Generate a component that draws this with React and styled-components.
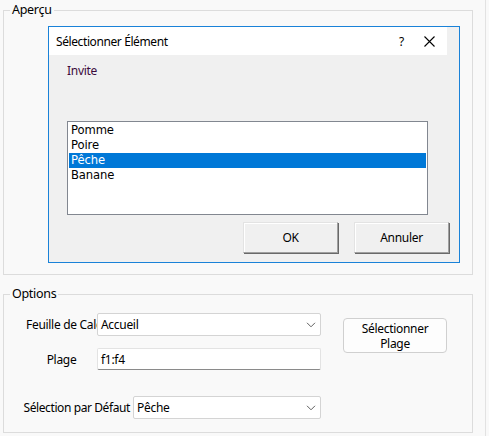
import React from "react";
import styled, { createGlobalStyle } from "styled-components";

const GlobalStyle = createGlobalStyle`
  html, body {
    margin: 0;
    padding: 0;
    background: #f9f9f9;
  }
  body {
    font-family: "Noto Sans", "Open Sans", sans-serif;
    font-size: 12px;
    letter-spacing: -0.3px;
    color: #000;
  }
`;

const fruits = ["Pomme", "Poire", "Pêche", "Banane"];

const Chevron = () => (
  <svg width="10" height="6" viewBox="0 0 10 6">
    <path d="M1 0.8 L5 4.8 L9 0.8" fill="none" stroke="#606060" strokeWidth="1" />
  </svg>
);

const CloseIcon = () => (
  <svg width="11" height="11" viewBox="0 0 11 11">
    <path d="M0.5 0.5 L10.5 10.5 M10.5 0.5 L0.5 10.5" stroke="#000" strokeWidth="1.1" />
  </svg>
);

const App = () => {
  return (
    <>
      <GlobalStyle />
      <Page>
        <Group>
          <Legend>Aperçu</Legend>
          <PreviewArea>
            <Dialog>
              <TitleBar>
                <Title>Sélectionner Élément</Title>
                <Help>?</Help>
                <CloseBtn>
                  <CloseIcon />
                </CloseBtn>
              </TitleBar>
              <DialogBody>
                <Prompt>Invite</Prompt>
                <ListBox>
                  {fruits.map((f) => (
                    <ListItem key={f} $selected={f === "Pêche"}>
                      {f}
                    </ListItem>
                  ))}
                </ListBox>
                <ButtonRow>
                  <ClassicButton>OK</ClassicButton>
                  <ClassicButton>Annuler</ClassicButton>
                </ButtonRow>
              </DialogBody>
            </Dialog>
          </PreviewArea>
        </Group>

        <Group $height="147px">
          <Legend>Options</Legend>
          <OptionsLayout>
            <Fields>
              <FieldRow>
                <ClipLabel>Feuille de Calcul</ClipLabel>
                <Combo $width="224px">
                  <span>Accueil</span>
                  <Chevron />
                </Combo>
              </FieldRow>
              <FieldRow $top="12px">
                <CenterLabel>Plage</CenterLabel>
                <TextBox>f1:f4</TextBox>
              </FieldRow>
              <FieldRow $top="26px">
                <WideLabel>Sélection par Défaut</WideLabel>
                <Combo $width="188px">
                  <span>Pêche</span>
                  <Chevron />
                </Combo>
              </FieldRow>
            </Fields>
            <RangeButton>
              Sélectionner
              <br />
              Plage
            </RangeButton>
          </OptionsLayout>
        </Group>
      </Page>
    </>
  );
};

const Page = styled.div`
  width: 486px;
  height: 436px;
  box-sizing: border-box;
  border-right: 1px solid #e2e2e2;
  padding: 2px 0 0 3px;
  display: flex;
  flex-direction: column;
  gap: 11px;
`;

const Group = styled.fieldset`
  margin: 0;
  width: 470px;
  box-sizing: border-box;
  height: ${(p) => p.$height || "auto"};
  border: 1px solid #dcdcdc;
  padding: 0;
  min-width: 0;
`;

const Legend = styled.legend`
  margin-left: 6px;
  padding: 0 2px;
  font-size: 12.5px;
  line-height: 16px;
  height: 16px;
  color: #000;
`;

const PreviewArea = styled.div`
  padding: 8px 12px 11px 44px;
`;

const Dialog = styled.div`
  width: 412px;
  height: 237px;
  box-sizing: border-box;
  border: 1px solid #1a82d8;
  background: #f0f0f0;
  display: flex;
  flex-direction: column;
`;

const TitleBar = styled.div`
  height: 28px;
  flex: none;
  margin-right: 12px;
  background: #fff;
  display: flex;
  align-items: center;
  padding-left: 7px;
`;

const Title = styled.div`
  flex: 1;
  font-size: 12px;
  letter-spacing: -0.4px;
`;

const Help = styled.div`
  font-size: 12px;
  width: 7px;
  margin-right: 18px;
`;

const CloseBtn = styled.div`
  display: flex;
  align-items: center;
  margin-right: 12px;
`;

const DialogBody = styled.div`
  flex: 1;
  display: flex;
  flex-direction: column;
  padding: 8px 10px 0 18px;
  font-family: "DejaVu Sans", sans-serif;
  font-size: 11.6px;
  letter-spacing: -0.1px;
`;

const Prompt = styled.div`
  font-family: "Noto Sans", sans-serif;
  font-size: 12px;
  letter-spacing: -0.3px;
  color: #3c0a3c;
  height: 16px;
  line-height: 16px;
`;

const ListBox = styled.div`
  margin-top: 42px;
  width: 361px;
  height: 94px;
  box-sizing: border-box;
  border: 1px solid #828790;
  background: #fff;
  padding: 1px 1px 0 1px;
`;

const ListItem = styled.div`
  height: 15px;
  line-height: 15px;
  padding-left: 2px;
  background: ${(p) => (p.$selected ? "#0078d7" : "transparent")};
  color: ${(p) => (p.$selected ? "#fff" : "#000")};
`;

const ButtonRow = styled.div`
  margin-top: 7px;
  display: flex;
  justify-content: flex-end;
  gap: 16px;
`;

const ClassicButton = styled.div`
  width: 95px;
  height: 31px;
  box-sizing: border-box;
  background: #f0f0f0;
  border-style: solid;
  border-width: 1px;
  border-color: #e3e3e3 #a0a0a0 #a0a0a0 #e3e3e3;
  box-shadow: 1px 1px 0 #696969, inset 1px 1px 0 #fff;
  display: flex;
  align-items: center;
  justify-content: center;
  font-family: "Noto Sans", sans-serif;
  font-size: 12px;
  letter-spacing: -0.3px;
`;

const OptionsLayout = styled.div`
  display: flex;
  align-items: flex-start;
  padding: 11px 0 0 22px;
`;

const Fields = styled.div`
  display: flex;
  flex-direction: column;
  width: 295px;
`;

const FieldRow = styled.div`
  display: flex;
  align-items: center;
  margin-top: ${(p) => p.$top || "0"};
`;

const ClipLabel = styled.div`
  width: 71px;
  white-space: nowrap;
  overflow: hidden;
`;

const CenterLabel = styled.div`
  width: 71px;
  text-align: center;
`;

const WideLabel = styled.div`
  width: 104px;
  text-align: right;
  margin-right: 3px;
  white-space: nowrap;
  direction: rtl;
  letter-spacing: -0.4px;
`;

const Combo = styled.div`
  width: ${(p) => p.$width};
  height: 23px;
  box-sizing: border-box;
  background: #fff;
  border: 1px solid #d4d4d4;
  border-radius: 2px;
  display: flex;
  align-items: center;
  justify-content: space-between;
  padding: 0 4px 0 3px;
`;

const TextBox = styled.div`
  width: 224px;
  height: 22px;
  box-sizing: border-box;
  background: #fff;
  border: 1px solid #e3e3e3;
  border-bottom-color: #8a8a8a;
  border-radius: 2px;
  display: flex;
  align-items: center;
  padding-left: 3px;
`;

const RangeButton = styled.div`
  margin: 5px 0 0 22px;
  width: 104px;
  height: 35px;
  box-sizing: border-box;
  background: #fdfdfd;
  border: 1px solid #d0d0d0;
  border-radius: 4px;
  display: flex;
  align-items: center;
  justify-content: center;
  text-align: center;
  line-height: 15px;
`;

export default App;
